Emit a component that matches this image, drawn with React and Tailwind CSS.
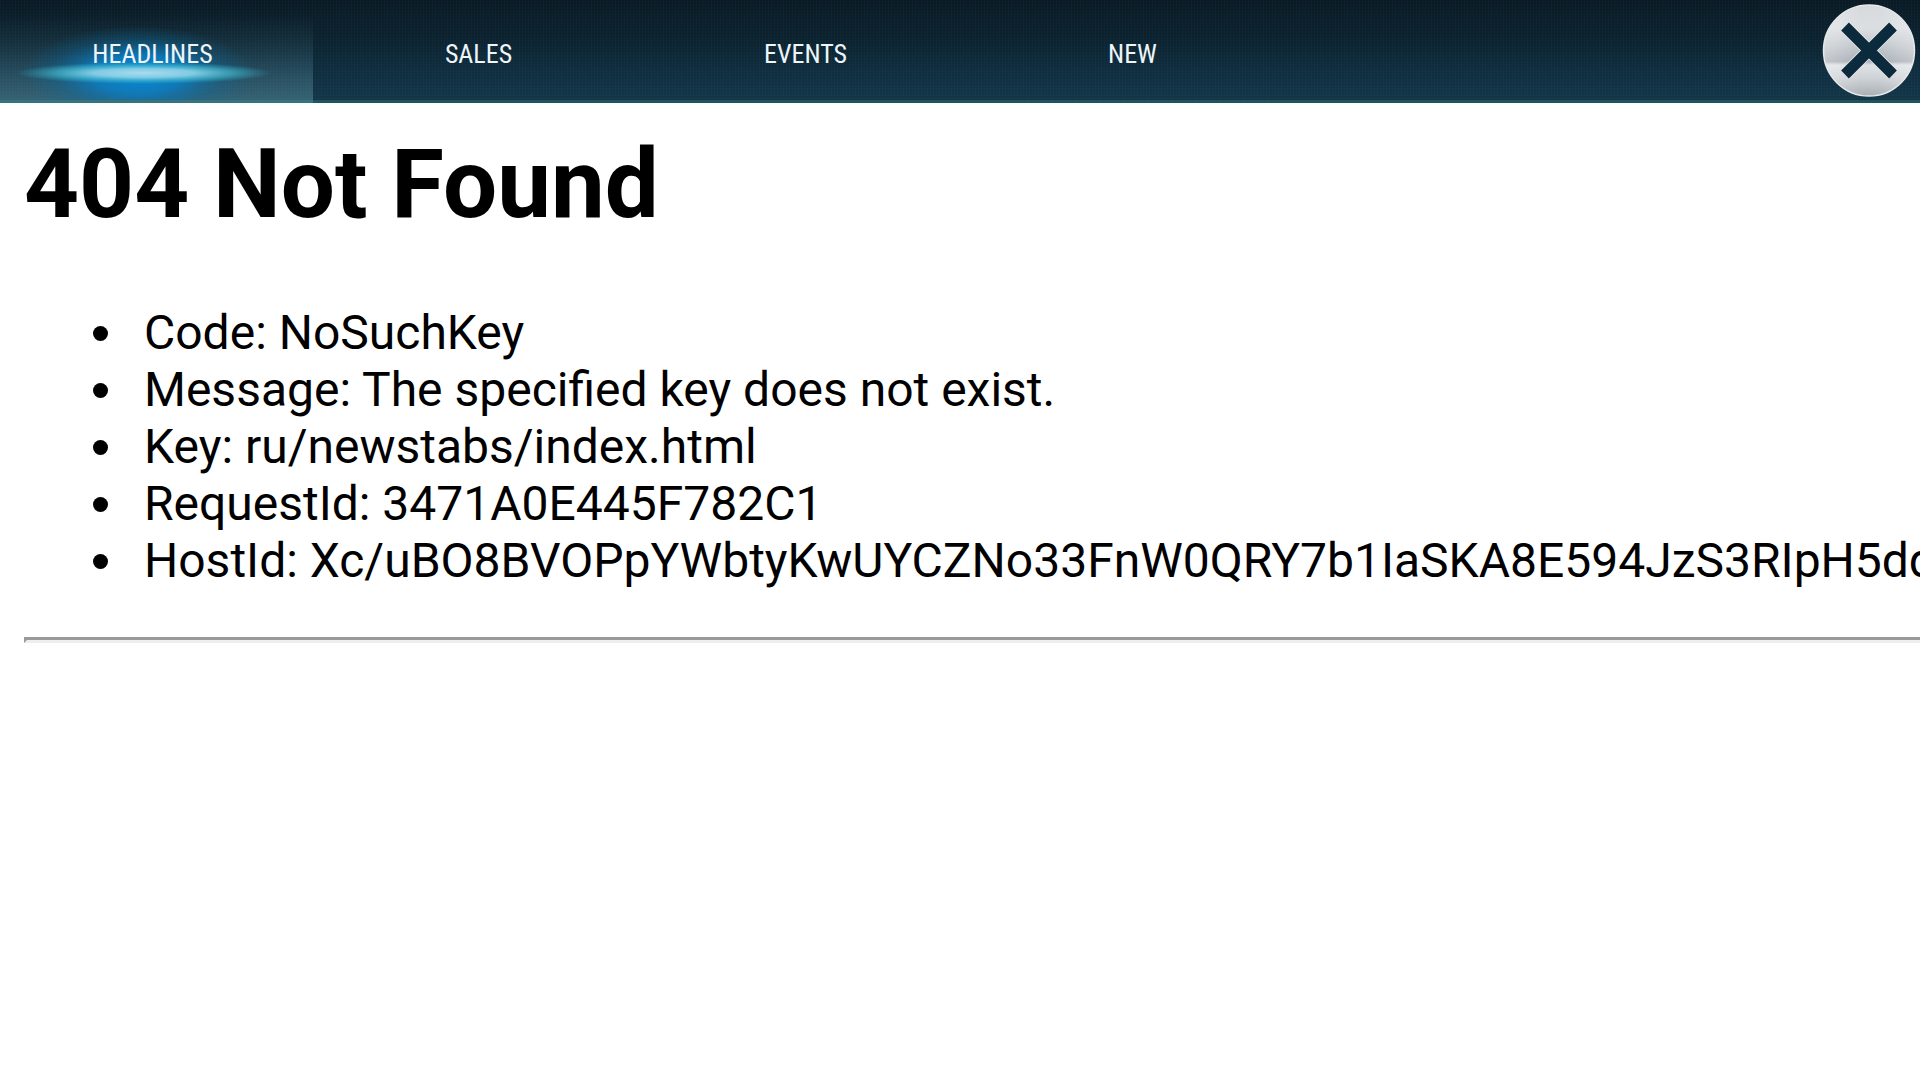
import React from 'react';
import clsx from 'clsx';

const tabs = [
  { label: 'HEADLINES', active: true },
  { label: 'SALES' },
  { label: 'EVENTS' },
  { label: 'NEW' },
];

const details = [
  { name: 'Code', value: 'NoSuchKey' },
  { name: 'Message', value: 'The specified key does not exist.' },
  { name: 'Key', value: 'ru/newstabs/index.html' },
  { name: 'RequestId', value: '3471A0E445F782C1' },
  { name: 'HostId', value: 'Xc/uBO8BVOPpYWbtyKwUYCZNo33FnW0QRY7b1IaSKA8E594JzS3RIpH5dd' },
];

// Blue light behind the active tab
function Glow() {
  return (
    <svg className="absolute inset-0 w-full h-full" viewBox="0 0 313 100" preserveAspectRatio="none" aria-hidden="true">
      <defs>
        <radialGradient id="halo">
          <stop offset="0" stopColor="#0a8ad6" />
          <stop offset="0.4" stopColor="#0a7fc6" stopOpacity="0.85" />
          <stop offset="0.75" stopColor="#0c6a9f" stopOpacity="0.3" />
          <stop offset="1" stopColor="#0c6a9f" stopOpacity="0" />
        </radialGradient>
        <radialGradient id="beam">
          <stop offset="0" stopColor="#a9dcee" />
          <stop offset="0.4" stopColor="#8ed3e8" stopOpacity="0.9" />
          <stop offset="0.7" stopColor="#45bfd2" stopOpacity="0.6" />
          <stop offset="1" stopColor="#35b4c9" stopOpacity="0" />
        </radialGradient>
      </defs>
      <ellipse cx="138" cy="74" rx="116" ry="48" fill="url(#halo)" />
      <ellipse cx="144" cy="73" rx="128" ry="11" fill="url(#beam)" />
    </svg>
  );
}

function CloseIcon() {
  return (
    <svg className="block w-[94px] h-[94px]" viewBox="0 0 94 94" aria-hidden="true">
      <defs>
        <linearGradient id="metal" x1="0" y1="0" x2="0" y2="1">
          <stop offset="0" stopColor="#d6dadd" />
          <stop offset="0.25" stopColor="#dcdfe2" />
          <stop offset="0.45" stopColor="#c3c8cd" />
          <stop offset="0.62" stopColor="#a9afb6" />
          <stop offset="0.66" stopColor="#dfe2e5" />
          <stop offset="0.8" stopColor="#cfd3d7" />
          <stop offset="1" stopColor="#a9afb5" />
        </linearGradient>
        <linearGradient id="shine" x1="0" y1="0" x2="1" y2="0">
          <stop offset="0" stopColor="#fff" stopOpacity="0.3" />
          <stop offset="0.4" stopColor="#fff" stopOpacity="0" />
          <stop offset="0.6" stopColor="#fff" stopOpacity="0" />
          <stop offset="1" stopColor="#fff" stopOpacity="0.3" />
        </linearGradient>
      </defs>
      <circle cx="47" cy="47.5" r="45.5" fill="url(#metal)" />
      <circle cx="47" cy="47.5" r="45.5" fill="url(#shine)" stroke="#e6e9eb" strokeWidth="1.5" />
      <path d="M23 23.5 71 71.5M71 23.5 23 71.5" fill="none" stroke="#e6e9ec" strokeWidth="13" />
      <path d="M23 23.5 71 71.5M71 23.5 23 71.5" fill="none" stroke="#0b2a3c" strokeWidth="11" />
    </svg>
  );
}

export default function App() {
  return (
    <div className="w-full min-h-screen bg-white overflow-hidden font-['Roboto',sans-serif] text-black">
      {/* Top bar */}
      <header className="flex items-stretch justify-between h-[103px] border-b-3 border-[#1d545e] bg-[repeating-linear-gradient(90deg,rgba(80,160,180,0.04)_0px,rgba(80,160,180,0.04)_1px,transparent_1px,transparent_3px),repeating-linear-gradient(0deg,rgba(0,0,0,0.08)_0px,rgba(0,0,0,0.08)_1px,transparent_1px,transparent_3px),linear-gradient(#0b1b26,#0d2431_40%,#102f41_70%,#15384b)]">
        <nav className="flex">
          {tabs.map((tab) => (
            <button
              key={tab.label}
              type="button"
              className={clsx(
                "relative flex items-center justify-center pt-2 text-[26px] leading-8 font-['Roboto_Condensed','Roboto',sans-serif] text-[#eef5f9] cursor-pointer",
                tab.active
                  ? 'w-[313px] pr-2 -mb-[3px] border-b-3 border-[#34747f] bg-[linear-gradient(rgba(110,170,185,0)_15%,rgba(110,170,185,0.12)_50%,rgba(110,170,185,0.38))]'
                  : 'w-[327px] pl-1'
              )}
            >
              {tab.active && <Glow />}
              <span className="relative">{tab.label}</span>
            </button>
          ))}
        </nav>

        <button type="button" aria-label="Close" className="self-center mr-1 cursor-pointer">
          <CloseIcon />
        </button>
      </header>

      {/* Error page */}
      <main className="pl-6 pt-[25px]">
        <h1 className="text-[96px] leading-[113px] font-bold">404 Not Found</h1>

        <ul className="mt-[63px] mb-12 pl-[106px] list-disc text-5xl leading-[57px] whitespace-nowrap">
          {details.map((item) => (
            <li key={item.name} className="pl-3.5">
              {item.name}: {item.value}
            </li>
          ))}
        </ul>

        <hr className="h-1.5 border-0 border-l-3 border-t-3 border-b-3 border-t-[#9a9a9a] border-l-[#9a9a9a] border-b-[#eeeeee]" />
      </main>
    </div>
  );
}
